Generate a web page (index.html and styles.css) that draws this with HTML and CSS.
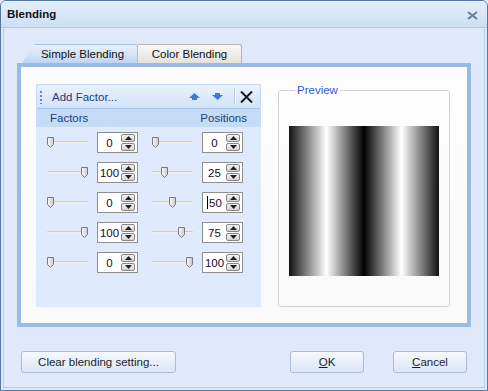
FILE: index.html
```html
<!DOCTYPE html>
<html lang="en">
  <head>
    <meta charset="UTF-8" />
    <title>Blending</title>
    <link rel="stylesheet" href="styles.css">
  </head>
  <body>
    <div class="window">
      <div class="titlebar">
        <span class="title">Blending</span>
        <svg class="close" width="11" height="9" viewBox="0 0 11 9">
          <path d="M1 1 L10 8 M10 1 L1 8" stroke="#6c7e98" stroke-width="2" />
        </svg>
      </div>

      <div class="client">
        <div class="tabs">
          <div class="tab active">Simple Blending</div>
          <div class="tab">Color Blending</div>
        </div>

        <div class="tab-panel">
          <div class="factors">
            <div class="toolbar">
              <span class="grip"></span>
              <span class="add">Add Factor...</span>
              <svg class="tool-icon" width="11" height="7" viewBox="0 0 11 7">
                <path d="M5.5 0 L11 5 L8 5 L8 7 L3 7 L3 5 L0 5 Z" fill="#3b7bd6" />
              </svg>
              <svg class="tool-icon" width="11" height="7" viewBox="0 0 11 7">
                <path d="M5.5 7 L11 2 L8 2 L8 0 L3 0 L3 2 L0 2 Z" fill="#3b7bd6" />
              </svg>
              <span class="sep"></span>
              <svg class="tool-icon" width="13" height="12" viewBox="0 0 13 12">
                <path d="M1 0.5 L12 11.5 M12 0.5 L1 11.5" stroke="#1a1a1a" stroke-width="2" />
              </svg>
            </div>
            <div class="list-header">
              <span>Factors</span>
              <span>Positions</span>
            </div>
            <div class="rows" id="rows"></div>
          </div>

          <fieldset class="preview">
            <legend>Preview</legend>
            <div class="swatch"></div>
          </fieldset>
        </div>

        <div class="buttons">
          <button class="btn btn-wide">Clear blending setting...</button>
          <div class="btn-pair">
            <button class="btn"><u>O</u>K</button>
            <button class="btn"><u>C</u>ancel</button>
          </div>
        </div>
      </div>
    </div>

    <script>
      const factors = [0, 100, 0, 100, 0];
      const positions = [0, 25, 50, 75, 100];
      const rows = document.querySelector("#rows");

      function slider(value) {
        const left = Math.round((value / 100) * 34);
        return `
          <div class="slider">
            <div class="track"></div>
            <svg class="thumb" style="left:${left}px" width="7" height="11" viewBox="0 0 7 11">
              <defs>
                <linearGradient id="tg" x1="0" x2="1">
                  <stop offset="0" stop-color="#fafafa" />
                  <stop offset="1" stop-color="#c9c9c9" />
                </linearGradient>
              </defs>
              <path d="M0.5 0.5 H6.5 V7.5 L3.5 10.5 L0.5 7.5 Z" fill="url(#tg)" stroke="#7b7b7b" />
            </svg>
          </div>`;
      }

      function spin(value, caret) {
        return `
          <div class="spin">
            <span class="value">${caret ? '<i class="caret"></i>' : ""}${value}</span>
            <div class="spin-btns">
              <span class="spin-btn">
                <svg width="7" height="4" viewBox="0 0 7 4"><path d="M3.5 0 L7 4 L0 4 Z" fill="#222" /></svg>
              </span>
              <span class="spin-btn">
                <svg width="7" height="4" viewBox="0 0 7 4"><path d="M0 0 L7 0 L3.5 4 Z" fill="#222" /></svg>
              </span>
            </div>
          </div>`;
      }

      for (let i = 0; i < factors.length; i++) {
        rows.innerHTML += `
          <div class="row">
            ${slider(factors[i])}
            ${spin(factors[i], false)}
            ${slider(positions[i])}
            ${spin(positions[i], i === 2)}
          </div>`;
      }
    </script>
  </body>
</html>
```

FILE: styles.css
```css
* {
  margin: 0;
  padding: 0;
  box-sizing: border-box;
}

body {
  width: 488px;
  height: 391px;
  font-family: "Liberation Sans", Arial, sans-serif;
  font-size: 11.5px;
  color: #1b1b1b;
  background-color: #dfe9f9;
}

/* Janela */
.window {
  width: 488px;
  height: 391px;
  display: flex;
  flex-direction: column;
  border: 1px solid #56779f;
  border-radius: 6px 6px 0 0;
  background-color: #dfe9f9;
  overflow: hidden;
}

.titlebar {
  height: 27px;
  display: flex;
  align-items: center;
  justify-content: space-between;
  padding: 0 9px 0 6px;
  border-bottom: 1px solid #b3cbec;
  background: linear-gradient(#e4eefb, #cddff5);
}

.title {
  font-weight: bold;
  font-size: 11.5px;
  color: #111;
}

.close {
  margin-top: 2px;
}

.client {
  flex: 1;
  margin: 0 2px 2px;
  border: 1px solid #b3cbee;
  border-top: none;
  padding: 16px 13px 0;
  display: flex;
  flex-direction: column;
}

/* Abas */
.tabs {
  display: flex;
  height: 19px;
  padding-left: 5px;
}

.tab {
  height: 19px;
  line-height: 18px;
  text-align: center;
  border: 1px solid #b9b7b2;
  border-bottom: none;
  border-left: none;
  border-radius: 0 3px 0 0;
  background: linear-gradient(#f9f8f6, #e4e1dc);
  width: 104px;
  color: #111;
}

.tab.active {
  width: 116px;
  padding-left: 6px;
  border-color: #a3c0e7;
  background: linear-gradient(#e9f1fd, #c0d5f2);
  clip-path: polygon(13px 0, 100% 0, 100% 100%, 0 100%);
}

.tab-panel {
  height: 264px;
  display: flex;
  gap: 17px;
  padding: 17px 17px 16px 15px;
  border: 4px solid #9ab9e4;
  background: linear-gradient(#fdfdfd, #f9f9f9);
}

/* Lista de fatores */
.factors {
  width: 225px;
  background-color: #dfeafc;
}

.toolbar {
  height: 25px;
  display: flex;
  align-items: center;
  padding: 0 7px 0 3px;
  border: 1px solid #c3d7f3;
  border-bottom-color: #a9c4ea;
  border-radius: 3px;
  background: linear-gradient(#e9f1fd, #d3e3f8);
}

.grip {
  width: 2px;
  height: 14px;
  background-image: radial-gradient(circle, #5f86c2 0.9px, transparent 1px);
  background-size: 2px 4px;
}

.add {
  flex: 1;
  margin-left: 10px;
  color: #1d3f78;
}

.tool-icon {
  margin-left: 12px;
}

.toolbar .tool-icon:first-of-type {
  margin-left: 0;
}

.sep {
  width: 1px;
  height: 17px;
  margin: 0 5px 0 11px;
  background-color: #b8cbe6;
  box-shadow: 1px 0 0 #fff;
}

.toolbar .sep + .tool-icon {
  margin-left: 0;
}

.list-header {
  height: 18px;
  display: flex;
  align-items: center;
  justify-content: space-between;
  padding: 0 14px;
  background-color: #c6dbf6;
  color: #1d3f78;
}

.rows {
  display: flex;
  flex-direction: column;
  gap: 9px;
  padding: 5px 0 0 11px;
}

.row {
  height: 21px;
  display: flex;
  align-items: center;
}

.slider {
  position: relative;
  width: 41px;
  height: 11px;
}

.track {
  margin-top: 4px;
  height: 3px;
  border-top: 1px solid #cfcdc4;
  background-color: #efeee7;
  border-radius: 1px;
}

.thumb {
  position: absolute;
  top: 0;
  display: block;
}

.spin {
  width: 41px;
  height: 21px;
  margin-left: 9px;
  margin-right: 14px;
  display: flex;
  align-items: center;
  border: 1px solid #8f8f8f;
  background-color: #fff;
}

.value {
  flex: 1;
  text-align: center;
  color: #140a2e;
}

.caret {
  display: inline-block;
  width: 1px;
  height: 13px;
  margin-right: 1px;
  vertical-align: -2px;
  background-color: #000;
}

.spin-btns {
  width: 14px;
  margin-right: 2px;
  display: flex;
  flex-direction: column;
  gap: 1px;
}

.spin-btn {
  height: 8px;
  display: flex;
  align-items: center;
  justify-content: center;
  border: 1px solid #878787;
  border-radius: 2px;
  background: linear-gradient(#f3f3f3, #d4d4d4);
}

/* Preview */
.preview {
  width: 172px;
  min-width: 0;
  border: 1px solid #d2d2d2;
  border-radius: 3px;
  padding: 30px 10px 0;
}

.preview legend {
  margin-left: 6px;
  padding: 0 2px;
  color: #3656d0;
}

.swatch {
  width: 150px;
  height: 150px;
  background: linear-gradient(to right, #111 0%, #fff 25%, #000 50%, #fff 75%, #111 100%);
}

/* Botoes */
.buttons {
  display: flex;
  justify-content: space-between;
  margin-top: 24px;
  padding: 0 4px 0 4px;
}

.btn-pair {
  display: flex;
  gap: 29px;
}

.btn {
  width: 74px;
  height: 22px;
  font-family: "Liberation Sans", Arial, sans-serif;
  font-size: 11.5px;
  color: #1b1b2e;
  border: 1px solid #a9bcd8;
  border-radius: 3px;
  background: linear-gradient(#f6f9fe, #dbe6f5);
}

.btn-wide {
  width: 155px;
}
```
